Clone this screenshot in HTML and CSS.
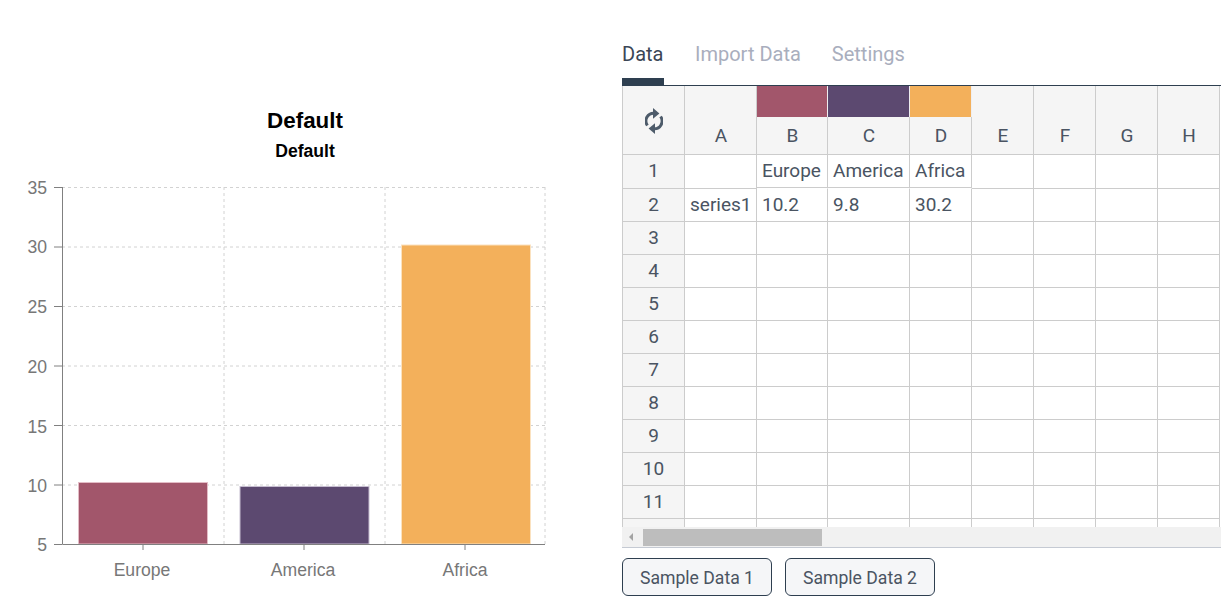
FILE: index.html
```html
<!DOCTYPE html>
<html lang="en">
<head>
    <meta charset="UTF-8">
    <title>Chart Editor</title>
    <link rel="stylesheet" href="styles.css">
</head>
<body>

<div class="chart-panel">
    <svg class="chart" width="622" height="601" viewBox="0 0 622 601">
        <text class="chart-title" x="305" y="128">Default</text>
        <text class="chart-subtitle" x="305" y="157">Default</text>

        <!-- grid -->
        <path class="grid-line" d="M62 187.5H545M62 247H545M62 306.5H545M62 366H545M62 425.5H545M62 485H545"/>
        <path class="grid-line" d="M224 187V544M385 187V544M545 187V544"/>

        <!-- bars -->
        <rect class="bar" x="78.5" y="482.5" width="129" height="61.5" fill="#a2566b" stroke="#e3bcc6"/>
        <rect class="bar" x="240" y="486.5" width="129" height="57.5" fill="#5c4970" stroke="#c6bdd0"/>
        <rect class="bar" x="401.5" y="245" width="129" height="299" fill="#f3b05b" stroke="#fbe2c0"/>

        <!-- axes -->
        <path class="axis-line" d="M62.5 187V544.5H545"/>
        <path class="axis-line" d="M54 187.5H62M54 247H62M54 306.5H62M54 366H62M54 425.5H62M54 485H62M54 544.5H62M143 544V550M304 544V550M465 544V550"/>

        <text class="y-label" x="47" y="194">35</text>
        <text class="y-label" x="47" y="253">30</text>
        <text class="y-label" x="47" y="313">25</text>
        <text class="y-label" x="47" y="373">20</text>
        <text class="y-label" x="47" y="433">15</text>
        <text class="y-label" x="47" y="492">10</text>
        <text class="y-label" x="47" y="551">5</text>

        <text class="x-label" x="142" y="576">Europe</text>
        <text class="x-label" x="303" y="576">America</text>
        <text class="x-label" x="465" y="576">Africa</text>
    </svg>
</div>

<div class="editor-panel">
    <div class="tabs">
        <div class="tab active">Data</div>
        <div class="tab">Import Data</div>
        <div class="tab">Settings</div>
    </div>

    <div class="sheet">
        <table class="data-table">
            <colgroup>
                <col class="col-index">
                <col class="col-a">
                <col class="col-b">
                <col class="col-c">
                <col class="col-std">
                <col class="col-std">
                <col class="col-std">
                <col class="col-std">
                <col class="col-std">
            </colgroup>
            <thead>
                <tr>
                    <th class="reload-cell">
                        <svg class="reload-icon" width="18" height="26" viewBox="0 0 18 26">
                            <path class="reload-arc" d="M2.4 17.5A7.8 7.8 0 0 1 9.5 5.2"/>
                            <path class="reload-arc" d="M15.6 8.5A7.8 7.8 0 0 1 8.5 20.8"/>
                            <polygon class="reload-head" points="8,0 14.4,5.4 8,10.8"/>
                            <polygon class="reload-head" points="10,15.2 3.6,20.6 10,26"/>
                        </svg>
                    </th>
                    <th><div class="col-label">A</div></th>
                    <th><div class="swatch swatch-red"></div><div class="col-label">B</div></th>
                    <th><div class="swatch swatch-purple"></div><div class="col-label">C</div></th>
                    <th><div class="swatch swatch-orange"></div><div class="col-label">D</div></th>
                    <th><div class="col-label">E</div></th>
                    <th><div class="col-label">F</div></th>
                    <th><div class="col-label">G</div></th>
                    <th><div class="col-label">H</div></th>
                </tr>
            </thead>
            <tbody>
                <tr class="first-row"><th>1</th><td></td><td class="filled">Europe</td><td class="filled">America</td><td class="filled">Africa</td><td></td><td></td><td></td><td></td></tr>
                <tr><th>2</th><td>series1</td><td>10.2</td><td>9.8</td><td>30.2</td><td></td><td></td><td></td><td></td></tr>
                <tr><th>3</th><td></td><td></td><td></td><td></td><td></td><td></td><td></td><td></td></tr>
                <tr><th>4</th><td></td><td></td><td></td><td></td><td></td><td></td><td></td><td></td></tr>
                <tr><th>5</th><td></td><td></td><td></td><td></td><td></td><td></td><td></td><td></td></tr>
                <tr><th>6</th><td></td><td></td><td></td><td></td><td></td><td></td><td></td><td></td></tr>
                <tr><th>7</th><td></td><td></td><td></td><td></td><td></td><td></td><td></td><td></td></tr>
                <tr><th>8</th><td></td><td></td><td></td><td></td><td></td><td></td><td></td><td></td></tr>
                <tr><th>9</th><td></td><td></td><td></td><td></td><td></td><td></td><td></td><td></td></tr>
                <tr><th>10</th><td></td><td></td><td></td><td></td><td></td><td></td><td></td><td></td></tr>
                <tr><th>11</th><td></td><td></td><td></td><td></td><td></td><td></td><td></td><td></td></tr>
                <tr><th></th><td></td><td></td><td></td><td></td><td></td><td></td><td></td><td></td></tr>
            </tbody>
        </table>
    </div>

    <div class="scrollbar">
        <div class="scroll-arrow"></div>
        <div class="scroll-thumb"></div>
    </div>

    <div class="sample-buttons">
        <button class="sample-btn">Sample Data 1</button>
        <button class="sample-btn">Sample Data 2</button>
    </div>
</div>

</body>
</html>
```

FILE: styles.css
```css
body {
    margin: 0;
    height: 601px;
    display: flex;
    overflow: hidden;
    background-color: #fff;
    font-family: Roboto, Arial, sans-serif;
    color: #4a5462;
}
.chart-panel {
    width: 622px;
    flex-shrink: 0;
}
.chart {
    display: block;
}
.chart text {
    font-family: "Liberation Sans", Arial, sans-serif;
}
.chart-title {
    font-size: 22.4px;
    font-weight: bold;
    text-anchor: middle;
    fill: #000;
}
.chart-subtitle {
    font-size: 17.6px;
    font-weight: bold;
    text-anchor: middle;
    fill: #000;
}
.grid-line {
    fill: none;
    stroke: #d2d2d2;
    stroke-width: 1;
    stroke-dasharray: 3 3;
}
.axis-line {
    fill: none;
    stroke: #808080;
    stroke-width: 1;
}
.y-label {
    font-size: 17.6px;
    fill: #777;
    text-anchor: end;
}
.x-label {
    font-size: 17.6px;
    fill: #777;
    text-anchor: middle;
}

.editor-panel {
    flex: 1;
    min-width: 0;
}
.tabs {
    display: flex;
    height: 85px;
    gap: 31px;
    border-bottom: 1px solid #2e3f50;
}
.tab {
    padding-top: 42px;
    height: 43px;
    font-size: 20px;
    line-height: 24px;
    color: #a9aebd;
}
.tab.active {
    min-width: 42px;
    color: #3b4656;
    box-shadow: inset 0 -7px 0 #2e3f50;
}

.sheet {
    height: 441px;
    overflow: hidden;
}
.data-table {
    table-layout: fixed;
    width: 598px;
    border-collapse: separate;
    border-spacing: 0;
    font-size: 19px;
}
.col-index { width: 63px; }
.col-a { width: 72px; }
.col-b { width: 71px; }
.col-c { width: 82px; }
.col-std { width: 62px; }
.data-table th,
.data-table td {
    box-sizing: border-box;
    height: 33px;
    padding: 0 0 2px;
    border-right: 1px solid #ccc;
    border-bottom: 1px solid #ccc;
    font-weight: normal;
}
.data-table th {
    background-color: #f5f5f5;
    text-align: center;
}
.data-table td {
    padding: 0 0 2px 5px;
    white-space: nowrap;
    overflow: hidden;
}
.data-table tbody th,
.data-table .reload-cell {
    border-left: 1px solid #ccc;
}
.first-row th,
.first-row td {
    height: 34px;
}
.first-row .filled {
    border-bottom-color: #fff;
    box-shadow: inset 0 -1px 0 #ccc;
}
.data-table thead th {
    height: 69px;
    padding: 0;
    vertical-align: bottom;
}
.data-table thead .reload-cell {
    vertical-align: middle;
}
.reload-icon {
    display: block;
    margin: 2px auto 0;
}
.reload-arc {
    fill: none;
    stroke: #4d5b6a;
    stroke-width: 3;
}
.reload-head {
    fill: #4d5b6a;
}
.col-label {
    height: 37px;
    line-height: 37px;
    padding-left: 1px;
}
.swatch {
    height: 31px;
    box-shadow: 1px 0 0 #efeef0;
}
.swatch-red { background-color: #a2566b; }
.swatch-purple { background-color: #5c4970; }
.swatch-orange { background-color: #f3b05b; }

.scrollbar {
    display: flex;
    align-items: center;
    height: 20px;
    background-color: #f1f1f1;
    border-bottom: 1px solid #c5cad3;
}
.scroll-arrow {
    width: 0;
    height: 0;
    margin: 0 6px 0 7px;
    border-top: 4px solid transparent;
    border-bottom: 4px solid transparent;
    border-right: 4px solid #a3a3a3;
}
.scroll-thumb {
    width: 179px;
    height: 17px;
    margin-left: 4px;
    background-color: #bdbdbd;
}

.sample-buttons {
    display: flex;
    gap: 13px;
    margin-top: 10px;
}
.sample-btn {
    width: 150px;
    height: 38px;
    padding: 1px 0 0;
    border: 1px solid #2e3f50;
    border-radius: 6px;
    background-color: #f5f6f8;
    font-family: Roboto, Arial, sans-serif;
    font-size: 17.6px;
    color: #4a5462;
}
```
